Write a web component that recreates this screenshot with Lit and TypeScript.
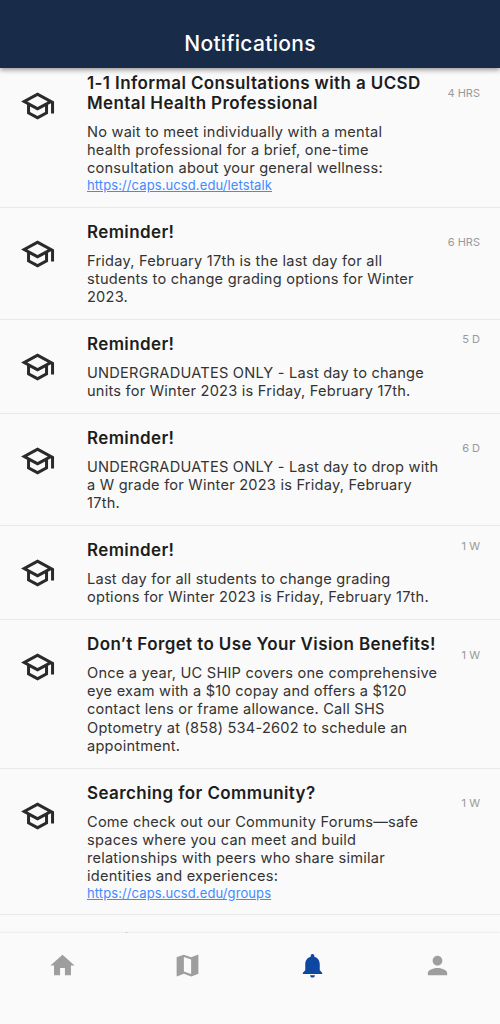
import { LitElement, html, css, svg } from "lit";
import { customElement } from "lit/decorators.js";

interface Notice {
  title: string[];
  lines: string[];
  link?: string;
  age: string;
  compact?: boolean;
}

const notices: Notice[] = [
  {
    title: ["1-1 Informal Consultations with a UCSD", "Mental Health Professional"],
    lines: ["No wait to meet individually with a mental", "health professional for a brief, one-time", "consultation about your general wellness:"],
    link: "https://caps.ucsd.edu/letstalk",
    age: "4 HRS",
  },
  {
    title: ["Reminder!"],
    lines: ["Friday, February 17th is the last day for all", "students to change grading options for Winter", "2023."],
    age: "6 HRS",
  },
  {
    title: ["Reminder!"],
    lines: ["UNDERGRADUATES ONLY - Last day to change", "units for Winter 2023 is Friday, February 17th."],
    age: "5 D",
    compact: true,
  },
  {
    title: ["Reminder!"],
    lines: ["UNDERGRADUATES ONLY - Last day to drop with", "a W grade for Winter 2023 is Friday, February", "17th."],
    age: "6 D",
  },
  {
    title: ["Reminder!"],
    lines: ["Last day for all students to change grading", "options for Winter 2023 is Friday, February 17th."],
    age: "1 W",
    compact: true,
  },
  {
    title: ["Don’t Forget to Use Your Vision Benefits!"],
    lines: ["Once a year, UC SHIP covers one comprehensive", "eye exam with a $10 copay and offers a $120", "contact lens or frame allowance. Call SHS", "Optometry at (858) 534-2602 to schedule an", "appointment."],
    age: "1 W",
  },
  {
    title: ["Searching for Community?"],
    lines: ["Come check out our Community Forums—safe", "spaces where you can meet and build", "relationships with peers who share similar", "identities and experiences:"],
    link: "https://caps.ucsd.edu/groups",
    age: "1 W",
  },
  { title: ["Reminder!"], lines: [], age: "" },
];

const tabs = [
  svg`<path d="M10 20v-6h4v6h5v-8h3L12 3 2 12h3v8z"/>`,
  svg`<path d="M20.5 3l-.16.03L15 5.1 9 3 3.36 4.9c-.21.07-.36.25-.36.48V20.5c0 .28.22.5.5.5l.16-.03L9 18.9l6 2.1 5.64-1.9c.21-.07.36-.25.36-.48V3.5c0-.28-.22-.5-.5-.5zM15 19l-6-2.11V5l6 2.11V19z"/>`,
  svg`<path d="M12 22c1.1 0 2-.9 2-2h-4c0 1.1.89 2 2 2zm6-6v-5c0-3.07-1.64-5.64-4.5-6.32V4c0-.83-.67-1.5-1.5-1.5s-1.5.67-1.5 1.5v.68C7.63 5.36 6 7.92 6 11v5l-2 2v1h16v-1l-2-2z"/>`,
  svg`<path d="M12 12c2.21 0 4-1.79 4-4s-1.79-4-4-4-4 1.79-4 4 1.79 4 4 4zm0 2c-2.67 0-8 1.34-8 4v2h16v-2c0-2.66-5.33-4-8-4z"/>`,
];

@customElement("app-root")
export class AppRoot extends LitElement {
  static styles = css`
    :host {
      display: flex;
      flex-direction: column;
      height: 1024px;
      overflow: hidden;
      background: #fafafa;
      font-family: Inter, sans-serif;
      color: #1d1d1d;
    }
    .header {
      flex: none;
      box-sizing: border-box;
      height: 68px;
      padding-top: 31px;
      background: #182b49;
      color: #fff;
      text-align: center;
      font-size: 21px;
      line-height: 26px;
      font-weight: 500;
      letter-spacing: 0.3px;
      box-shadow: 0 2px 5px rgba(0, 0, 0, 0.4);
      z-index: 1;
    }
    .list {
      flex: 1;
      min-height: 0;
      overflow: hidden;
      display: flex;
      flex-direction: column;
    }
    .row {
      flex: none;
      display: grid;
      grid-template-columns: 67px 1fr auto;
      align-items: start;
      padding: 14px 20px 13.15px;
      border-bottom: 1px solid #e9e9e9;
    }
    .row:first-child {
      margin-top: -9.1px;
      padding-bottom: 13.9px;
    }
    .row:last-child {
      padding-top: 15px;
    }
    .cap {
      width: 36px;
      height: 36px;
      margin-top: 14.7px;
      fill: #2a2a2a;
    }
    .title {
      margin: 0 0 9.4px;
      font-size: 17px;
      line-height: 20.4px;
      font-weight: 600;
      letter-spacing: 0.38px;
      white-space: nowrap;
    }
    .text {
      font-size: 14.6px;
      line-height: 18.1px;
      letter-spacing: 0.22px;
      color: #333;
      white-space: nowrap;
    }
    .link {
      display: block;
      font-size: 13px;
      line-height: 15.4px;
      letter-spacing: 0.1px;
      padding-top: 0.9px;
      margin-bottom: -0.8px;
      color: #448aff;
      text-decoration: underline;
    }
    .age {
      margin-top: 13.3px;
      font-size: 11px;
      line-height: 15px;
      letter-spacing: 0;
      color: #999;
    }
    .compact .age {
      margin-top: -1.8px;
    }
    .nav {
      flex: none;
      box-sizing: border-box;
      height: 91px;
      padding-top: 18px;
      display: grid;
      grid-template-columns: repeat(4, 1fr);
      justify-items: center;
      background: #fafafa;
      box-shadow: 0 -1px 2px rgba(0, 0, 0, 0.06);
      z-index: 1;
    }
    .tab {
      width: 29px;
      height: 29px;
      fill: #9e9e9e;
    }
    .active {
      fill: #0d47a1;
    }
  `;

  render() {
    return html`
      <header class="header">Notifications</header>
      <main class="list">
        ${notices.map(
          (n) => html`<article class="row ${n.compact ? "compact" : ""}">
            <svg class="cap" viewBox="0.3 0 24 24"><path d="M12 3L1 9l4 2.18v6L12 21l7-3.82v-6l2-1.09V17h2V9L12 3zm6.82 6L12 12.72 5.18 9 12 5.28 18.82 9zM17 15.99l-5 2.73-5-2.73v-3.72L12 15l5-2.73v3.72z"/></svg>
            <div>
              <h2 class="title">${n.title.map((t) => html`<div>${t}</div>`)}</h2>
              <div class="text">${n.lines.map((t) => html`<div>${t}</div>`)}${n.link ? html`<a class="link">${n.link}</a>` : ""}</div>
            </div>
            <span class="age">${n.age}</span>
          </article>`
        )}
      </main>
      <nav class="nav">
        ${tabs.map((t, i) => html`<svg class="tab ${i === 2 ? "active" : ""}" viewBox="0 0 24 24">${t}</svg>`)}
      </nav>
    `;
  }
}
